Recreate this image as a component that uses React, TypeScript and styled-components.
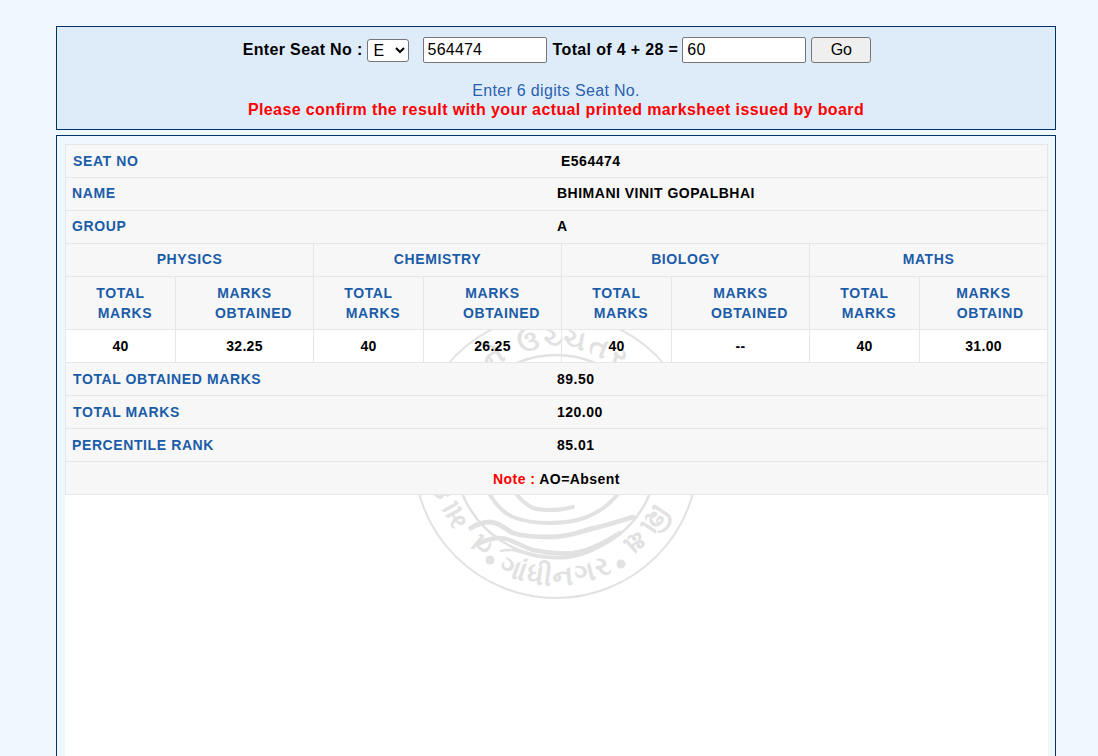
import styled, { createGlobalStyle } from 'styled-components';

const GlobalStyle = createGlobalStyle`
  html, body {
    margin: 0;
    padding: 0;
    background: #eff7ff;
    height: 756px;
    overflow: hidden;
    font-family: 'Liberation Sans', Arial, sans-serif;
  }
`;

const Page = styled.div`
  width: 1000px;
  margin: 0 0 0 56px;
  padding-top: 26px;
`;

const SearchBox = styled.form`
  box-sizing: border-box;
  height: 104px;
  border: 1px solid #003366;
  background: #deecfa;
  text-align: center;
  padding-top: 10px;
  margin-bottom: 5px;
`;

const SearchRow = styled.div`
  display: flex;
  justify-content: center;
  align-items: center;
  height: 26px;
  padding-left: 2px;
`;

const Label = styled.label`
  font-size: 16px;
  font-weight: bold;
  color: #000;
  letter-spacing: 0.35px;
`;

const SeatSelect = styled.select`
  width: 42px;
  height: 23px;
  margin: 0 14px 0 4px;
  padding: 0 0 0 2px;
  font: 16px 'Liberation Sans', Arial, sans-serif;
  background: #fff;
  border: 1px solid #767676;
  border-radius: 3px;
`;

const TextInput = styled.input<{ $after: number }>`
  box-sizing: border-box;
  width: 124px;
  height: 26px;
  padding: 1px 4px;
  margin: 0 ${(p) => p.$after}px 0 0;
  font: 16px 'Liberation Sans', Arial, sans-serif;
  letter-spacing: 0.2px;
  border: 1px solid #767676;
  border-radius: 2px;
  background: #fff;
`;

const SumLabel = styled(Label)`
  margin-right: 4px;
`;

const GoButton = styled.button`
  box-sizing: border-box;
  width: 60px;
  height: 26px;
  font: 16px 'Liberation Sans', Arial, sans-serif;
  color: #000;
  background: #efefef;
  border: 1px solid #767676;
  border-radius: 3px;
`;

const Hint = styled.div`
  margin-top: 18px;
  font-size: 16px;
  line-height: 19px;
  color: #2a62ad;
  letter-spacing: 0.33px;
`;

const Warning = styled.div`
  font-size: 16px;
  line-height: 19px;
  font-weight: bold;
  color: #ff0000;
  letter-spacing: 0.385px;
`;

const ResultBox = styled.div`
  box-sizing: border-box;
  height: 640px;
  border: 1px solid #003366;
  padding: 8px 7px 0 8px;
`;

const ResultInner = styled.div`
  position: relative;
  height: 100%;
  background: #fff;
`;

const Seal = styled.svg`
  position: absolute;
  left: 346px;
  top: 167px;
  width: 290px;
  height: 290px;
`;

const SealText = styled.text<{ $spread: number }>`
  font-family: 'Noto Sans', sans-serif;
  font-size: 28px;
  font-weight: bold;
  letter-spacing: ${(p) => p.$spread}px;
  fill: #e2e2e2;
  stroke: none;
`;

const Sheet = styled.div`
  position: relative;
  width: 983px;
  font-size: 14px;
  font-weight: bold;
`;

const InfoRow = styled.div<{ $lift?: boolean }>`
  box-sizing: border-box;
  display: grid;
  grid-template-columns: 491px 1fr;
  align-items: center;
  height: 34px;
  margin-top: -1px;
  padding-bottom: ${(p) => (p.$lift ? 2 : 0)}px;
  border: 1px solid #e7e7e7;
  background: #f7f7f7;
  &:first-child {
    margin-top: 0;
  }
`;

const InfoLabel = styled.div<{ $indent?: number }>`
  padding-left: ${(p) => p.$indent ?? 7}px;
  color: #1a5ca8;
  letter-spacing: 0.6px;
`;

const InfoValue = styled.div<{ $indent?: number }>`
  padding-left: ${(p) => p.$indent ?? 0}px;
  color: #000;
  letter-spacing: 0.5px;
`;

const NoteRow = styled(InfoRow)`
  display: block;
  padding-top: 8px;
  line-height: 18px;
  text-align: center;
  letter-spacing: 0.45px;
`;

const Red = styled.span`
  color: #ff0000;
`;

const MarksTable = styled.table`
  width: 982px;
  margin-top: -1px;
  border-collapse: collapse;
  table-layout: fixed;
`;

const SubjectCell = styled.th`
  box-sizing: border-box;
  height: 33px;
  padding: 0 0 2px;
  border: 1px solid #e7e7e7;
  background: #f7f7f7;
  color: #1a5ca8;
  font-weight: bold;
  text-align: center;
  letter-spacing: 0.6px;
`;

const HeadCell = styled(SubjectCell)`
  height: 53px;
  padding: 0;
  line-height: 20px;
`;

const MarkCell = styled.td`
  box-sizing: border-box;
  height: 33px;
  padding: 0;
  border: 1px solid #e7e7e7;
  color: #000;
  text-align: center;
  letter-spacing: 0.3px;
`;

const colWidths = [110, 138, 110, 138, 110, 138, 110, 128];
const subjects = ['PHYSICS', 'CHEMISTRY', 'BIOLOGY', 'MATHS'];
const marks = ['40', '32.25', '40', '26.25', '40', '--', '40', '31.00'];
const heads: [string, string][] = [
  ['TOTAL', '\u00a0\u00a0MARKS'],
  ['MARKS', '\u00a0\u00a0\u00a0\u00a0OBTAINED'],
  ['TOTAL', '\u00a0\u00a0MARKS'],
  ['MARKS', '\u00a0\u00a0\u00a0\u00a0OBTAINED'],
  ['TOTAL', '\u00a0\u00a0MARKS'],
  ['MARKS', '\u00a0\u00a0\u00a0\u00a0OBTAINED'],
  ['TOTAL', '\u00a0\u00a0MARKS'],
  ['MARKS', '\u00a0\u00a0\u00a0OBTAIND'],
];

const App = () => {
  return (
    <>
      <GlobalStyle />
      <Page>
        <SearchBox onSubmit={(e) => e.preventDefault()}>
          <SearchRow>
            <Label>Enter Seat No :</Label>
            <SeatSelect defaultValue="E">
              <option>E</option>
            </SeatSelect>
            <TextInput $after={6} defaultValue="564474" />
            <SumLabel>Total of 4 + 28 =</SumLabel>
            <TextInput $after={5} defaultValue="60" />
            <GoButton>Go</GoButton>
          </SearchRow>
          <Hint>Enter 6 digits Seat No.</Hint>
          <Warning>Please confirm the result with your actual printed marksheet issued by board</Warning>
        </SearchBox>
        <ResultBox>
          <ResultInner>
            <Seal viewBox="0 0 290 290" fill="none" stroke="#e2e2e2" strokeLinecap="round">
              <defs>
                <path id="sealTop" d="M75.6 227.7A108 108 0 1 1 214.4 227.7" />
                <path id="sealBottom" d="M30 205A130 130 0 0 0 260 205" />
              </defs>
              <circle cx="145" cy="145" r="142" strokeWidth="2" />
              <circle cx="145" cy="145" r="101" strokeWidth="2.5" />
              <SealText $spread={3.4} textAnchor="middle">
                <textPath href="#sealTop" startOffset="51%">ગુજરાત માધ્યમિક અને ઉચ્ચતર માધ્યમિક શિક્ષણ બોર્ડ</textPath>
              </SealText>
              <SealText $spread={2.5} textAnchor="middle">
                <textPath href="#sealBottom" startOffset="50%">ગાંધીનગર</textPath>
              </SealText>
              <circle cx="79" cy="249" r="4.5" fill="#e2e2e2" stroke="none" />
              <circle cx="210" cy="253" r="4.5" fill="#e2e2e2" stroke="none" />
              <path d="M79 184c6 10 14 18 23 22 12 5 25 6 37 6 13 0 26-2 37-6 12-5 22-12 30-22" strokeWidth="4" />
              <path d="M106 184c5 6 10 10 16 13 6 2 11 2 17 2 8 0 16-1 23-3" strokeWidth="4" />
              <path d="M60 217c6-4 12-6 19-6 9 0 15 7 23 11 12 4 25 4 37 4 13 0 25-3 37-7 16-4 31-8 46-13" strokeWidth="5" />
              <path d="M69 232c6-3 13-5 20-5 11 0 22 9 33 12 13 3 27 4 40 3 17-2 32-11 47-20" strokeWidth="4.5" />
              <path d="M90 240c4-1 8-1 12-1 9 2 18 6 27 7 9 1 18 2 27 1 10-1 19-4 27-8" strokeWidth="2.5" />
            </Seal>
            <Sheet>
              <InfoRow>
                <InfoLabel>SEAT NO</InfoLabel>
                <InfoValue $indent={4}>E564474</InfoValue>
              </InfoRow>
              <InfoRow $lift>
                <InfoLabel $indent={6}>NAME</InfoLabel>
                <InfoValue>BHIMANI VINIT GOPALBHAI</InfoValue>
              </InfoRow>
              <InfoRow $lift>
                <InfoLabel $indent={6}>GROUP</InfoLabel>
                <InfoValue>A</InfoValue>
              </InfoRow>
              <MarksTable>
                <colgroup>
                  {colWidths.map((w, i) => (
                    <col key={i} style={{ width: w }} />
                  ))}
                </colgroup>
                <thead>
                  <tr>
                    {subjects.map((s) => (
                      <SubjectCell key={s} colSpan={2}>{s}</SubjectCell>
                    ))}
                  </tr>
                  <tr>
                    {heads.map(([first, second], i) => (
                      <HeadCell key={i}>
                        {first}
                        <br />
                        {second}
                      </HeadCell>
                    ))}
                  </tr>
                </thead>
                <tbody>
                  <tr>
                    {marks.map((m, i) => (
                      <MarkCell key={i}>{m}</MarkCell>
                    ))}
                  </tr>
                </tbody>
              </MarksTable>
              <InfoRow>
                <InfoLabel>TOTAL OBTAINED MARKS</InfoLabel>
                <InfoValue>89.50</InfoValue>
              </InfoRow>
              <InfoRow>
                <InfoLabel>TOTAL MARKS</InfoLabel>
                <InfoValue>120.00</InfoValue>
              </InfoRow>
              <InfoRow>
                <InfoLabel $indent={6}>PERCENTILE RANK</InfoLabel>
                <InfoValue>85.01</InfoValue>
              </InfoRow>
              <NoteRow>
                <Red>Note : </Red>AO=Absent
              </NoteRow>
            </Sheet>
          </ResultInner>
        </ResultBox>
      </Page>
    </>
  );
};

export default App;
